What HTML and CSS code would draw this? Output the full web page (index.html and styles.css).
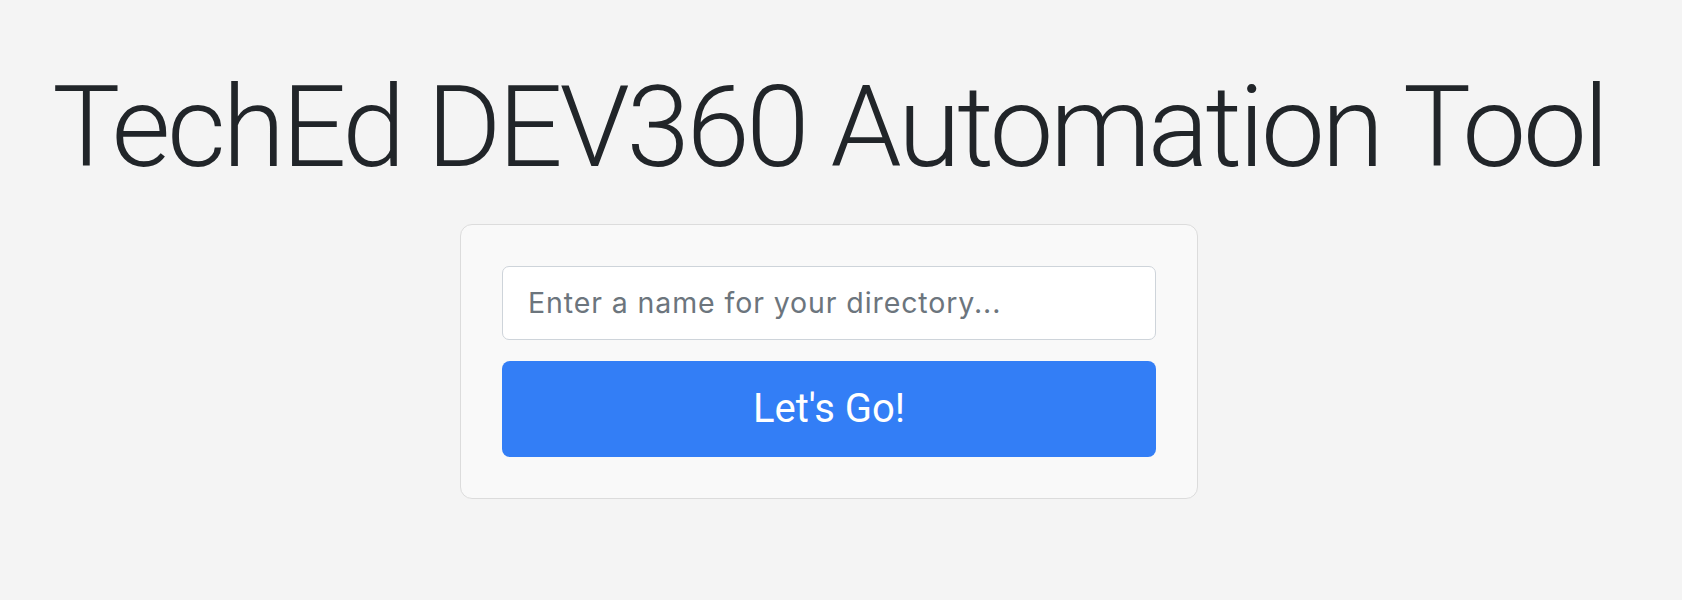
FILE: index.html
```html
<!DOCTYPE html>
<html lang="en">
<head>
<meta charset="utf-8">
<title>TechEd DEV360 Automation Tool</title>
<link rel="stylesheet" href="styles.css">
</head>
<body>
<main class="page">
  <h1 class="title">TechEd DEV360 Automation Tool</h1>
  <form class="card" onsubmit="return false;">
    <input class="name-input" type="text" placeholder="Enter a name for your directory...">
    <button class="go-btn" type="submit">Let's Go!</button>
  </form>
</main>
</body>
</html>
```

FILE: styles.css
```css
html, body {
  margin: 0;
  padding: 0;
  background: #f4f4f4;
}

body {
  font-family: Roboto, "Liberation Sans", sans-serif;
  color: #212529;
}

.page {
  width: 1658px;
  padding-top: 59px;
  display: flex;
  flex-direction: column;
  align-items: center;
}

.title {
  margin: 0 0 28px 0;
  font-family: Roboto, "Liberation Sans", sans-serif;
  font-weight: 350;
  font-size: 114px;
  line-height: 1.2;
  letter-spacing: -3.35px;
  color: #212529;
  text-align: center;
  white-space: nowrap;
}

.card {
  box-sizing: border-box;
  width: 738px;
  padding: 41px;
  background: #f9f9f9;
  border: 1px solid #dcdcdc;
  border-radius: 12px;
  display: flex;
  flex-direction: column;
  gap: 21px;
}

.name-input {
  box-sizing: border-box;
  width: 100%;
  height: 74px;
  padding: 0 25px;
  background: #ffffff;
  border: 1px solid #ced4da;
  border-radius: 7px;
  font-family: Inter, Roboto, sans-serif;
  font-size: 28.5px;
  letter-spacing: 0.9px;
  color: #212529;
  outline: none;
}

.name-input::placeholder {
  color: #6c757d;
  opacity: 1;
}

.go-btn {
  box-sizing: border-box;
  width: 100%;
  height: 96px;
  border: none;
  border-radius: 8px;
  background: #337ef6;
  color: #ffffff;
  font-family: Roboto, "Liberation Sans", sans-serif;
  font-size: 40px;
  font-weight: 400;
  cursor: pointer;
}
```
